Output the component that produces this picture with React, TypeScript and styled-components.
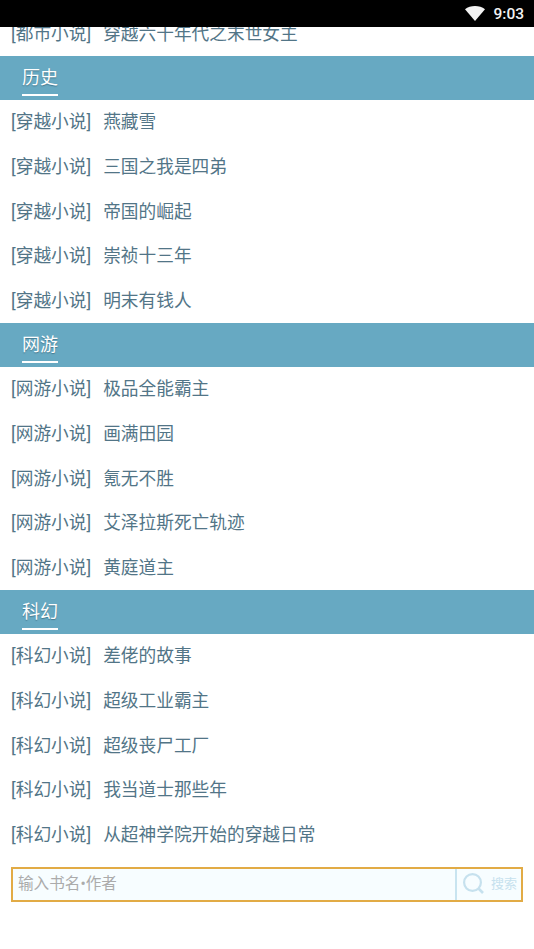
import React from "react";
import styled, { createGlobalStyle } from "styled-components";

const Global = createGlobalStyle`
  html, body { margin: 0; padding: 0; background: #fff; }
  * { box-sizing: border-box; }
`;

const Page = styled.div`
  width: 534px;
  height: 949px;
  overflow: hidden;
  background: #fff;
  display: flex;
  flex-direction: column;
  font-family: Roboto, "Noto Sans CJK SC", sans-serif;
`;

const StatusBar = styled.div`
  height: 27px;
  flex: none;
  background: #000;
  display: flex;
  align-items: center;
  justify-content: flex-end;
  gap: 8px;
  padding-right: 10px;
`;

const Clock = styled.span`
  color: #f2f2f2;
  font: 500 15.5px Roboto, sans-serif;
`;

const ClippedRow = styled.div`
  height: 29px;
  flex: none;
  overflow: hidden;
  display: flex;
  flex-direction: column;
  justify-content: flex-end;
`;

const Row = styled.div`
  height: 44.6px;
  flex: none;
  display: flex;
  align-items: center;
  padding: 2px 0 0 11px;
  gap: 12px;
  color: #527587;
  font-size: 17.7px;
  line-height: 1;
  white-space: nowrap;
`;

const SectionBar = styled.div`
  height: 44px;
  flex: none;
  background: #67a9c2;
  padding-left: 22px;
  display: flex;
`;

const SectionTitle = styled.div`
  height: 40px;
  display: flex;
  align-items: center;
  padding-top: 6px;
  border-bottom: 2px solid #fff;
  color: #fff;
  font-size: 18px;
  line-height: 1;
  text-shadow: 0 1px 1px rgba(40, 80, 100, 0.55);
`;

const SearchBox = styled.div`
  margin: 10px 11px 0;
  height: 35px;
  flex: none;
  border: 2px solid #e2ab45;
  background: #f7fdff;
  display: flex;
  align-items: stretch;
`;

const SearchText = styled.div`
  flex: 1;
  display: flex;
  align-items: center;
  padding: 0 0 0 5px;
  color: #ababab;
  font-size: 15.6px;
  line-height: 1;
  border-right: 2px solid #c8e4f0;
`;

const SearchButton = styled.div`
  width: 64px;
  flex: none;
  display: flex;
  align-items: center;
  padding: 0 0 1px 6px;
  gap: 7px;
  color: #c6e1ee;
  font-size: 13px;
  line-height: 1;
`;

const sections = [
  { title: "历史", tag: "[穿越小说]", books: ["燕藏雪", "三国之我是四弟", "帝国的崛起", "崇祯十三年", "明末有钱人"] },
  { title: "网游", tag: "[网游小说]", books: ["极品全能霸主", "画满田园", "氪无不胜", "艾泽拉斯死亡轨迹", "黄庭道主"] },
  { title: "科幻", tag: "[科幻小说]", books: ["差佬的故事", "超级工业霸主", "超级丧尸工厂", "我当道士那些年", "从超神学院开始的穿越日常"] },
];

export default function App() {
  return (
    <Page>
      <Global />
      <StatusBar>
        <svg width="20" height="15" viewBox="0 0 20 15">
          <path d="M0 3.2C2.8 1 6.2 0 10 0s7.2 1 10 3.2L10 15z" fill="#f2f2f2" />
        </svg>
        <Clock>9:03</Clock>
      </StatusBar>
      <ClippedRow>
        <Row>
          <span>[都市小说]</span>
          <span>穿越六十年代之末世女主</span>
        </Row>
      </ClippedRow>
      {sections.map((s) => (
        <React.Fragment key={s.title}>
          <SectionBar>
            <SectionTitle>{s.title}</SectionTitle>
          </SectionBar>
          {s.books.map((b) => (
            <Row key={b}>
              <span>{s.tag}</span>
              <span>{b}</span>
            </Row>
          ))}
        </React.Fragment>
      ))}
      <SearchBox>
        <SearchText>输入书名•作者</SearchText>
        <SearchButton>
          <svg width="21" height="21" viewBox="0 0 21 21" fill="none" stroke="#c6e1ee" strokeWidth="2.2">
            <circle cx="9.5" cy="9.5" r="8.4" />
            <path d="M15.5 15.5L20 20" strokeWidth="2.6" />
          </svg>
          <span>搜索</span>
        </SearchButton>
      </SearchBox>
    </Page>
  );
}
